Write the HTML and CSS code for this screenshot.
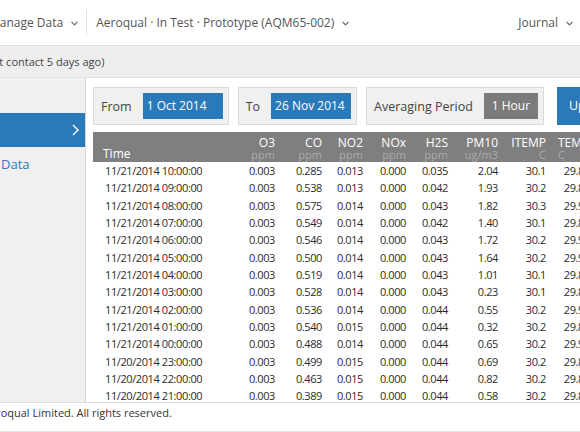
FILE: index.html
```html
<!DOCTYPE html>
<html lang="en">

<head>
    <meta charset="UTF-8">
    <title>Manage Data - Aeroqual</title>
    <link rel="stylesheet" href="styles.css">
</head>

<body>
    <div class="topbar">
        <div class="nav-item nav-manage">Manage Data
            <svg class="chev" width="7" height="5" viewBox="0 0 7 5"><polyline points="0.5,0.8 3.5,3.8 6.5,0.8" /></svg>
        </div>
        <div class="nav-sep"></div>
        <div class="nav-item">Aeroqual · In Test · Prototype (AQM65-002)
            <svg class="chev" width="7" height="5" viewBox="0 0 7 5"><polyline points="0.5,0.8 3.5,3.8 6.5,0.8" /></svg>
        </div>
        <div class="nav-item nav-journal">Journal
            <svg class="chev" width="7" height="5" viewBox="0 0 7 5"><polyline points="0.5,0.8 3.5,3.8 6.5,0.8" /></svg>
        </div>
    </div>

    <div class="status"><span>(Last contact 5 days ago)</span></div>

    <div class="main">
        <div class="sidebar">
            <div class="side-item active">
                <svg width="7" height="12" viewBox="0 0 7 12"><polyline points="1,1 6,6 1,11" /></svg>
            </div>
            <div class="side-item side-link">Data</div>
        </div>

        <div class="content">
            <div class="filters">
                <div class="filter">
                    <span class="filter-label">From</span>
                    <span class="filter-value">1 Oct 2014</span>
                </div>
                <div class="filter">
                    <span class="filter-label">To</span>
                    <span class="filter-value">26 Nov 2014</span>
                </div>
                <div class="filter">
                    <span class="filter-label">Averaging Period</span>
                    <span class="filter-value gray">1 Hour</span>
                </div>
                <div class="update">Update</div>
            </div>

            <table class="grid">
                <colgroup>
                    <col style="width:142px">
                    <col style="width:44px">
                    <col style="width:47px">
                    <col style="width:41px">
                    <col style="width:43px">
                    <col style="width:42px">
                    <col style="width:50px">
                    <col style="width:48px">
                    <col style="width:38px">
                </colgroup>
                <thead>
                    <tr>
                        <th class="time">Time</th>
                        <th>O3<span class="unit">ppm</span></th>
                        <th>CO<span class="unit">ppm</span></th>
                        <th>NO2<span class="unit">ppm</span></th>
                        <th>NOx<span class="unit">ppm</span></th>
                        <th>H2S<span class="unit">ppm</span></th>
                        <th>PM10<span class="unit">ug/m3</span></th>
                        <th>ITEMP<span class="unit">C</span></th>
                        <th class="temp">TEMP<span class="unit">C</span></th>
                    </tr>
                </thead>
                <tbody>
                    <tr><td class="time">11/21/2014 10:00:00</td><td>0.003</td><td>0.285</td><td>0.013</td><td>0.000</td><td>0.035</td><td>2.04</td><td>30.1</td><td>29.8</td></tr>
                    <tr><td class="time">11/21/2014 09:00:00</td><td>0.003</td><td>0.538</td><td>0.013</td><td>0.000</td><td>0.042</td><td>1.93</td><td>30.2</td><td>29.8</td></tr>
                    <tr><td class="time">11/21/2014 08:00:00</td><td>0.003</td><td>0.575</td><td>0.014</td><td>0.000</td><td>0.043</td><td>1.82</td><td>30.3</td><td>29.9</td></tr>
                    <tr><td class="time">11/21/2014 07:00:00</td><td>0.003</td><td>0.549</td><td>0.014</td><td>0.000</td><td>0.042</td><td>1.40</td><td>30.1</td><td>29.8</td></tr>
                    <tr><td class="time">11/21/2014 06:00:00</td><td>0.003</td><td>0.546</td><td>0.014</td><td>0.000</td><td>0.043</td><td>1.72</td><td>30.2</td><td>29.9</td></tr>
                    <tr><td class="time">11/21/2014 05:00:00</td><td>0.003</td><td>0.500</td><td>0.014</td><td>0.000</td><td>0.043</td><td>1.64</td><td>30.2</td><td>29.9</td></tr>
                    <tr><td class="time">11/21/2014 04:00:00</td><td>0.003</td><td>0.519</td><td>0.014</td><td>0.000</td><td>0.043</td><td>1.01</td><td>30.1</td><td>29.8</td></tr>
                    <tr><td class="time">11/21/2014 03:00:00</td><td>0.003</td><td>0.528</td><td>0.014</td><td>0.000</td><td>0.043</td><td>0.23</td><td>30.1</td><td>29.8</td></tr>
                    <tr><td class="time">11/21/2014 02:00:00</td><td>0.003</td><td>0.536</td><td>0.014</td><td>0.000</td><td>0.044</td><td>0.55</td><td>30.2</td><td>29.9</td></tr>
                    <tr><td class="time">11/21/2014 01:00:00</td><td>0.003</td><td>0.540</td><td>0.015</td><td>0.000</td><td>0.044</td><td>0.32</td><td>30.2</td><td>29.8</td></tr>
                    <tr><td class="time">11/21/2014 00:00:00</td><td>0.003</td><td>0.488</td><td>0.014</td><td>0.000</td><td>0.044</td><td>0.65</td><td>30.2</td><td>29.9</td></tr>
                    <tr><td class="time">11/20/2014 23:00:00</td><td>0.003</td><td>0.499</td><td>0.015</td><td>0.000</td><td>0.044</td><td>0.69</td><td>30.2</td><td>29.8</td></tr>
                    <tr><td class="time">11/20/2014 22:00:00</td><td>0.003</td><td>0.463</td><td>0.015</td><td>0.000</td><td>0.044</td><td>0.82</td><td>30.2</td><td>29.8</td></tr>
                    <tr><td class="time">11/20/2014 21:00:00</td><td>0.003</td><td>0.389</td><td>0.015</td><td>0.000</td><td>0.044</td><td>0.58</td><td>30.2</td><td>29.8</td></tr>
                    <tr><td class="time">11/20/2014 20:00:00</td><td>0.003</td><td>0.402</td><td>0.015</td><td>0.000</td><td>0.044</td><td>0.61</td><td>30.2</td><td>29.8</td></tr>
                </tbody>
            </table>
        </div>
    </div>

    <div class="footer"><span>© 2014 Aeroqual Limited. All rights reserved.</span></div>
</body>

</html>
```

FILE: styles.css
```css
* {
    box-sizing: border-box;
}

html,
body {
    margin: 0;
}

body {
    width: 580px;
    height: 432px;
    overflow: hidden;
    display: flex;
    flex-direction: column;
    font-family: "Open Sans", "Noto Sans", sans-serif;
    color: #333;
    background: #fff;
}

/* top navigation */
.topbar {
    flex: none;
    height: 46px;
    display: flex;
    align-items: center;
    padding-right: 7px;
    border-bottom: 1px solid #dcdcdc;
    font-size: 12px;
    color: #555;
    white-space: nowrap;
}

.nav-item {
    display: flex;
    align-items: center;
}

.nav-manage {
    margin-left: -11px;
}

.nav-journal {
    margin-left: auto;
}

.chev {
    margin-left: 8px;
    margin-top: 1px;
}

.chev polyline {
    fill: none;
    stroke: #6a6a6a;
    stroke-width: 1.2;
}

.nav-sep {
    width: 1px;
    height: 25px;
    margin: 0 9px 0 8px;
    background: #dedede;
}

/* status line */
.status {
    flex: none;
    height: 32px;
    line-height: 31px;
    background: #eeeeee;
    border-bottom: 1px solid #e2e2e2;
    font-size: 11px;
    color: #444;
    white-space: nowrap;
}

.status span {
    margin-left: -21px;
}

/* sidebar + content */
.main {
    flex: 1;
    min-height: 0;
    display: flex;
    overflow: hidden;
}

.sidebar {
    flex: none;
    width: 86px;
    padding-top: 35px;
    background: #f0f0f0;
    border-right: 1px solid #d6d6d6;
}

.side-item {
    height: 34px;
    display: flex;
    align-items: center;
}

.side-item.active {
    justify-content: flex-end;
    padding-right: 6px;
    background: #2a7ab9;
}

.side-item.active polyline {
    fill: none;
    stroke: #fff;
    stroke-width: 1.4;
}

.side-link {
    padding-left: 1px;
    font-size: 13px;
    color: #2a7ab9;
}

.content {
    flex: 1;
    min-width: 0;
    overflow: hidden;
    padding: 9px 0 0 7px;
}

/* filter bar */
.filters {
    display: flex;
    height: 38px;
    white-space: nowrap;
}

.filter {
    flex: none;
    display: flex;
    align-items: center;
    margin-right: 9px;
    padding: 0 5px 0 7px;
    background: #f0f0f0;
    border: 1px solid #dadada;
    font-size: 12px;
    color: #444;
}

.filter-label {
    margin-right: 11px;
    font-size: 12.5px;
}

.filter-value {
    width: 80px;
    height: 26px;
    line-height: 26px;
    padding-left: 4px;
    background: #2a7ab9;
    color: #fff;
}

.filter-value.gray {
    width: 54px;
    padding: 0;
    text-align: center;
    background: #7b7b7b;
}

.update {
    flex: none;
    margin-left: 4px;
    padding: 0 14px 0 12px;
    line-height: 38px;
    background: #2a7ab9;
    color: #fff;
    font-size: 12.5px;
}

/* data table */
.grid {
    margin-top: 7px;
    width: 495px;
    table-layout: fixed;
    border-collapse: collapse;
    font-size: 11px;
    color: #2b2b2b;
}

.grid th {
    padding: 5px 4px 2px 0;
    background: #7f7f7f;
    color: #fff;
    font-weight: normal;
    font-size: 12px;
    line-height: 12px;
    text-align: right;
    vertical-align: bottom;
    white-space: nowrap;
}

.grid th .unit {
    display: block;
    font-size: 11px;
    line-height: 11px;
    color: #ababab;
}

.grid th.time {
    padding-left: 10px;
    text-align: left;
}

.grid th.temp {
    text-align: left;
    padding-left: 8px;
}

.grid tbody tr {
    height: 17.33px;
}

.grid td {
    padding: 0 4px 0 0;
    line-height: 17px;
    text-align: right;
    letter-spacing: -0.4px;
    white-space: nowrap;
}

.grid td.time {
    padding-left: 12px;
    text-align: left;
}

/* footer */
.footer {
    flex: none;
    height: 30px;
    padding-top: 2px;
    line-height: 16px;
    border-top: 1px solid #dcdcdc;
    border-bottom: 1px solid #e3e8ec;
    font-size: 11px;
    color: #333;
    white-space: nowrap;
}

.footer span {
    display: inline-block;
    margin-left: -57px;
}
```
